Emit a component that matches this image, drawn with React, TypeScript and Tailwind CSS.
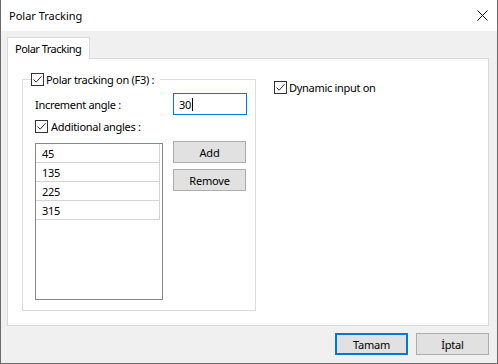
function CheckBox() {
  return (
    <span className="flex h-[13px] w-[13px] shrink-0 items-center justify-center border border-[#333333] bg-white">
      <svg width="11" height="11" viewBox="0 0 11 11" fill="none">
        <path d="M1.5 5.5 L4.2 8.2 L9.5 2.2" stroke="#333333" strokeWidth="1" />
      </svg>
    </span>
  )
}

function Btn({ label, focused }: { label: string; focused?: boolean }) {
  return (
    <button
      className={
        focused
          ? 'flex h-[22px] w-[73px] items-center justify-center border-2 border-[#0078d7] bg-[#e1e1e1] text-[11px] tracking-[-0.2px] text-black'
          : 'flex h-[22px] w-[73px] items-center justify-center border border-[#adadad] bg-[#e1e1e1] text-[11px] tracking-[-0.2px] text-black'
      }
    >
      {label}
    </button>
  )
}

const angles = ['45', '135', '225', '315']

export default function App() {
  return (
    <div className="flex h-[364px] w-[498px] flex-col border border-t-0 border-[#6b6b6b] bg-[#f0f0f0] font-['Noto_Sans',sans-serif] text-[11px] leading-[15px] tracking-[-0.3px] text-black">
      {/* title bar */}
      <div className="flex h-[31px] shrink-0 items-center justify-between bg-white pl-[8px] pr-[9px]">
        <span className="text-[11px] tracking-normal">Polar Tracking</span>
        <svg width="11" height="11" viewBox="0 0 11 11">
          <path d="M0.5 0.5 L10.5 10.5 M10.5 0.5 L0.5 10.5" stroke="#111" strokeWidth="1" />
        </svg>
      </div>

      <div className="flex flex-1 flex-col pl-[6px] pr-[8px] pt-[6px]">
        {/* tab strip */}
        <div className="relative z-10 flex">
          <div className="mb-[-1px] flex h-[22px] w-[83px] items-center whitespace-nowrap border border-b-0 border-[#d9d9d9] bg-white pl-[7px] tracking-[-0.5px]">
            Polar Tracking
          </div>
        </div>

        {/* tab panel */}
        <div className="flex h-[268px] border border-[#d9d9d9] bg-white">
          <div className="relative ml-[14px] mt-[20px] h-[232px] w-[234px] border border-[#dcdcdc]">
            <div className="absolute left-[8px] top-[-7px] flex h-[13px] items-center gap-[2px] whitespace-nowrap bg-white pr-[6px]">
              <CheckBox />
              <span>Polar tracking on (F3) :</span>
            </div>

            <div className="flex flex-col pl-[12px] pt-[13px]">
              <div className="flex items-center">
                <span className="w-[138px]">Increment angle :</span>
                <div className="flex h-[22px] w-[74px] items-center border border-[#0078d7] pl-[5px]">
                  30<span className="ml-[1px] h-[13px] w-px bg-black" />
                </div>
              </div>

              <div className="mt-[5px] flex h-[13px] items-center gap-[3px]">
                <CheckBox />
                <span>Additional angles :</span>
              </div>

              <div className="mt-[8px] flex items-start">
                <div className="mt-[2px] h-[157px] w-[128px] border border-[#828790] bg-white">
                  {angles.map((a) => (
                    <div
                      key={a}
                      className="flex h-[19px] w-[124px] items-center border-b border-r border-[#d4d4d4] pl-[6px]"
                    >
                      {a}
                    </div>
                  ))}
                </div>
                <div className="ml-[10px] flex flex-col gap-[6px]">
                  <Btn label="Add" />
                  <Btn label="Remove" />
                </div>
              </div>
            </div>
          </div>

          <div className="ml-[18px] mt-[22px] flex h-[13px] items-center gap-[2px] whitespace-nowrap">
            <CheckBox />
            <span>Dynamic input on</span>
          </div>
        </div>

        {/* footer */}
        <div className="mt-[7px] flex justify-end gap-[8px] pr-[-1px]">
          <Btn label="Tamam" focused />
          <Btn label="İptal" />
        </div>
      </div>
    </div>
  )
}
